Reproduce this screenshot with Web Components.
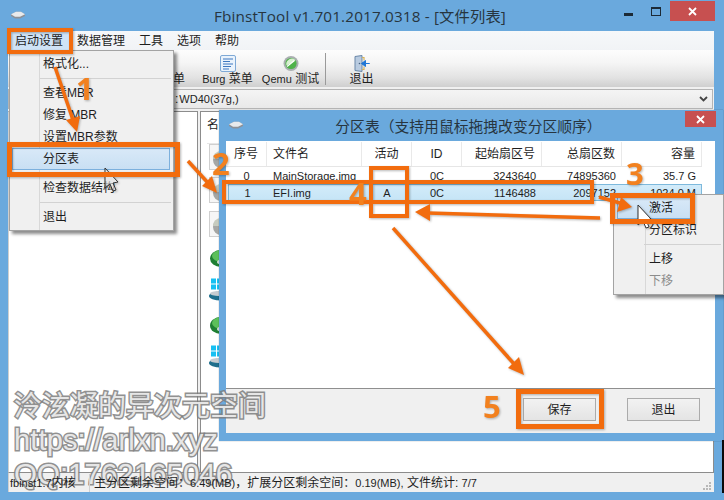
<!DOCTYPE html>
<html lang="zh">
<head>
<meta charset="utf-8">
<title>FbinstTool</title>
<style>
html,body{margin:0;padding:0;width:724px;height:500px;overflow:hidden;background:#000}
body{font:12px/16px "Liberation Sans","Noto Sans CJK SC",sans-serif;color:#1e1e1e;text-spacing-trim:space-all}
.n{font-size:11px}
</style>
</head>
<body>
<x-desktop>
  <x-window title="FbinstTool v1.701.2017.0318 - [文件列表]">
    <x-menubar>
      <x-bar-item active>启动设置</x-bar-item><x-bar-item>数据管理</x-bar-item><x-bar-item>工具</x-bar-item><x-bar-item>选项</x-bar-item><x-bar-item>帮助</x-bar-item>
    </x-menubar>
    <x-toolbar>
      <x-tool><span>菜单</span></x-tool>
      <x-tool><svg slot="icon" width="16" height="17" viewBox="0 0 16 17"><rect x=".5" y=".5" width="15" height="16" rx="1.5" fill="#eaf3fc" stroke="#7fa9d6"/><path d="M3 4h10M3 6.5h7M3 9h10M3 11.5h8M3 14h6" stroke="#3f78c0" stroke-width="1.1"/></svg><span class="n">Burg</span> 菜单</x-tool>
      <x-tool><svg slot="icon" width="16" height="17" viewBox="0 0 16 17"><circle cx="8" cy="8.5" r="7.5" fill="#a9aeb0"/><circle cx="8" cy="8.5" r="5.6" fill="#4fb24a"/><path d="M3.4 10.5A5.6 5.6 0 0 1 12.5 5L8.5 8z" fill="#d7f0cf"/><path d="M4 11.5 11.5 5.5" stroke="#fff" stroke-width="1.2"/></svg><span class="n">Qemu</span> 测试</x-tool>
      <x-tool-sep></x-tool-sep>
      <x-tool><svg slot="icon" width="17" height="17" viewBox="0 0 17 17"><path d="M2 1.5 9 .5v16l-7-1z" fill="#b9cbe0" stroke="#6a87a8"/><path d="M9 2.5h2v3M11 11.500v3H9" fill="none" stroke="#d7b35a" stroke-width="1.2"/><path d="M16.500 8.500h-4V5.500l-4 3 4 3v-3z" fill="#1e76d6" stroke="#1e76d6"/><circle cx="6.500" cy="8.500" r=".8" fill="#47617e"/></svg>退出</x-tool>
    </x-toolbar>
    <x-combo><span>:</span><span class="n" style="margin-left:1px">WD40(37g,)</span></x-combo>
    <x-panes>
      <x-pane slot="left"></x-pane>
      <x-pane slot="right">
        <x-file-list>
          <x-file-icon kind="box"></x-file-icon><x-file-icon kind="box"></x-file-icon><x-file-icon kind="box"></x-file-icon>
          <x-file-icon kind="green"></x-file-icon><x-file-icon kind="win"></x-file-icon>
          <x-file-icon kind="green"></x-file-icon><x-file-icon kind="win"></x-file-icon>
        </x-file-list>
      </x-pane>
    </x-panes>
    <x-statusbar>
      <span slot="a"><span class="n">fbinst1.7</span>内核</span>
      <span slot="b">主分区剩余空间：<span class="n">6.49(MB)</span>，扩展分区剩余空间：<span class="n">0.19(MB),</span> 文件统计: <span class="n">7/7</span></span>
    </x-statusbar>
  </x-window>

  <x-popup-menu style="left:9px;top:50px;width:165px;--gutter:29px">
    <x-item>格式化...</x-item><x-sep></x-sep>
    <x-item>查看MBR</x-item><x-item>修复 MBR</x-item><x-item>设置MBR参数</x-item>
    <x-item hl style="--inset:2px;--end:3px">分区表</x-item><x-sep></x-sep>
    <x-item>检查数据结构</x-item><x-sep></x-sep>
    <x-item>退出</x-item>
  </x-popup-menu>

  <x-dialog title="分区表（支持用鼠标拖拽改变分区顺序）">
    <x-table-row head>
      <span class="c">序号</span><span>文件名</span><span class="c">活动</span><span class="c">ID</span><span class="r">起始扇区号</span><span class="r">总扇区数</span><span class="r">容量</span>
    </x-table-row>
    <x-table-row>
      <span class="c n">0</span><span class="n">MainStorage.img</span><span class="c n"></span><span class="c n">0C</span><span class="r n">3243640</span><span class="r n">74895360</span><span class="r n">35.7 G</span>
    </x-table-row>
    <x-table-row selected>
      <span class="c n">1</span><span class="n">EFI.img</span><span class="c n">A</span><span class="c n">0C</span><span class="r n">1146488</span><span class="r n">2097152</span><span class="r n">1024.0 M</span>
    </x-table-row>
    <x-button slot="actions">保存</x-button>
    <x-button slot="actions">退出</x-button>
  </x-dialog>

  <x-popup-menu style="left:613px;top:194px;width:111px;--gutter:31px;--text:35px">
    <x-item hl style="--inset:3px;--end:31px">激活</x-item><x-item>分区标识</x-item><x-sep></x-sep>
    <x-item>上移</x-item><x-item disabled>下移</x-item>
  </x-popup-menu>

  <x-watermark>
    <div>泠泫凝的异次元空间</div>
    <div class="u">https://arlxn.xyz</div>
    <div class="q">QQ:1762165046</div>
  </x-watermark>
  <x-callouts></x-callouts>
</x-desktop>

<script>
const disk = (w=16,h=8)=>`<svg width="${w}" height="${h}" viewBox="0 0 16 8"><path d="M1 3.500 6 .8h5l4 2.700v1.500L10 7.500H5L1 5z" fill="#8d9197"/><path d="M1 3.300 6 .8h5l4 2.500-5 2.400H5z" fill="#e8eaec"/></svg>`;
function def(name, html, init){
  customElements.define(name, class extends HTMLElement{
    constructor(){
      super();
      this.attachShadow({mode:'open'});
    }
    connectedCallback(){
      if(this.shadowRoot.childElementCount) return;
      const t=document.createElement('template');
      t.innerHTML = typeof html==='function' ? html(this) : html;
      this.shadowRoot.append(t.content.cloneNode(true));
      if(init) init(this);
    }
  });
}

def('x-desktop',`<style>:host{display:block;position:relative;width:724px;height:500px;overflow:hidden}
.edge{position:absolute;left:722px;top:440px;width:2px;height:53px;background:#0a0a0a}</style><slot></slot><div class="edge"></div>`);

def('x-window',h=>`<style>
:host{display:flex;flex-direction:column;width:724px;height:500px;box-sizing:border-box;background:#6aa9dd;padding:0 10px 8px 8px}
header{height:31px;flex:none;display:flex;align-items:center;justify-content:center;position:relative;font:15.300px/20px "Open Sans","Noto Sans CJK SC",sans-serif;color:#27353f;letter-spacing:.15px;padding-right:2px}
.ico{position:absolute;left:2px;top:11px;display:flex}
.ctl{position:absolute;top:0;right:-1px;display:flex;align-items:flex-start}
.min{width:9px;height:3px;background:#1c2a36;margin:13px 18px 0 0}
.max{width:8px;height:6px;border:1.500px solid #1c2a36;border-top-width:2px;margin:7px 9px 0 0}
.cls{width:45px;height:20px;margin-top:1px;background:#c75050;color:#fff;display:flex;align-items:center;justify-content:center}
</style>
<header><span class="ico">${disk()}</span>${h.getAttribute('title')}
<span class="ctl"><span class="min"></span><span class="max"></span><span class="cls"><svg width="9" height="9" viewBox="0 0 9 9"><path d="M1 1l7 7M8 1 1 8" stroke="#fff" stroke-width="1.800"/></svg></span></span></header>
<slot></slot>`);

def('x-menubar',`<style>:host{display:flex;flex:none;height:19px;background:linear-gradient(#f6f8fa,#f1f3f6);align-items:stretch}</style><slot></slot>`);
def('x-bar-item',`<style>:host{display:flex;align-items:center;padding:0 7px;height:19px;box-sizing:border-box}
:host([active]){background:#cfe3f6;}</style><slot></slot>`);

def('x-toolbar',`<style>:host{display:grid;flex:none;height:37px;grid-template-columns:46px 63px 63px 6px 67px;padding-left:142px;background:linear-gradient(#fdfdfd 0,#f5f5f5 35%,#e2e2e2 75%,#cfcfcf 100%);border-bottom:0 solid #aaa}</style><slot></slot>`);
def('x-tool',`<style>:host{display:flex;flex-direction:column;align-items:center;height:37px}
.i{height:17px;margin-top:5px;display:flex;align-items:flex-start;justify-content:center}
.t{margin-top:-1px;line-height:16px;white-space:nowrap;padding-top:0}</style>
<div class="i"><slot name="icon"></slot></div><div class="t"><slot></slot></div>`);
def('x-tool-sep',`<style>:host{display:block;width:1px;margin:3px 0 2px 3px;background:#9a9a9a}</style>`);

def('x-combo',`<style>:host{display:block;flex:none;height:23px;box-sizing:border-box;background:#f0f0f0;padding:2px 1px 1px 0}
.b{height:20px;box-sizing:border-box;border:1px solid #b4b4b4;background:linear-gradient(#f4f4f4,#e9e9e9);display:flex;align-items:center;padding-left:166px;position:relative}
svg{position:absolute;right:4px;top:5px}</style>
<div class="b"><slot></slot><svg width="9" height="8" viewBox="0 0 9 8"><path d="M1 2l3.500 3.500L8 2" fill="none" stroke="#444" stroke-width="1.800"/></svg></div>`);

def('x-panes',`<style>:host{display:flex;flex:1;min-height:0;background:#f0f0f0;padding-top:1px}
::slotted([slot=left]){width:190px;flex:none}
::slotted([slot=right]){flex:1;margin-left:2px}</style><slot name="left"></slot><slot name="right"></slot>`);
def('x-pane',`<style>:host{display:block;box-sizing:border-box;background:#fff;border:1px solid #8c8c8c;border-width:1px 1px 0 1px;overflow:hidden}
:host([slot=left]){border-left-color:#cfcfcf}</style><slot></slot>`);

def('x-file-list',`<style>:host{display:block;padding:5px 0 0 6px}
.h{height:26px;line-height:16px;border-bottom:1px solid #e6e6e6;margin-bottom:0}
.g{display:grid;grid-auto-rows:33.330px;padding-left:2px}</style><div class="h">名称</div><div class="g"><slot></slot></div>`);
def('x-file-icon',h=>{
  const k=h.getAttribute('kind');
  let s='';
  if(k==='box') s=`<svg width="24" height="27" viewBox="0 0 24 27"><rect x=".5" y=".5" width="23" height="25" fill="#f6f6f6" stroke="#cfcfcf"/><ellipse cx="12" cy="16" rx="8" ry="8" fill="#a5a7a5"/><path d="M4 15a8 8 0 0 1 16 0z" fill="#c6cbbf"/></svg>`;
  if(k==='green') s=`<svg style="margin-top:5px" width="24" height="18" viewBox="0 0 24 18"><ellipse cx="12" cy="9.500" rx="11" ry="8.500" fill="#1f7f33"/><ellipse cx="13" cy="7" rx="10" ry="6" fill="#5cc05a"/><ellipse cx="14" cy="13" rx="6" ry="3" fill="#d7e2d8"/></svg>`;
  if(k==='win') s=`<svg width="24" height="24" viewBox="0 0 24 24"><path d="M2 1.500h5v5H2zM8 1.500h5.500v5H8zM2 7.500h5v5H2zM8 7.500h5.500v5H8z" fill="#17c0f2"/><ellipse cx="12" cy="19" rx="12" ry="4.500" fill="#1f6f8d"/><ellipse cx="10" cy="16.500" rx="9" ry="2.600" fill="#c6ccd1"/></svg>`;
  return `<style>:host{display:block;height:33px;overflow:visible}svg{display:block}</style>${s}`;
});

def('x-statusbar',`<style>:host{display:flex;flex:none;height:20px;box-sizing:border-box;align-items:center;background:#f0f0f0;border-top:1px solid #8c8c8c;border-left:1px solid #cfcfcf;position:relative;white-space:nowrap}
.a{width:79px;padding-left:1px;box-sizing:content-box;border-right:1px solid #d0d0d0;height:18px;line-height:18px;position:relative;z-index:5}
.b{padding-left:4px;position:relative;z-index:5}
svg{position:absolute;right:2px;bottom:1px}</style>
<div class="a"><slot name="a"></slot></div><div class="b"><slot name="b"></slot></div>
<svg width="9" height="9" viewBox="0 0 9 9" fill="#b8b8b8"><rect x="6" y="0" width="2" height="2"/><rect x="3" y="3" width="2" height="2"/><rect x="6" y="3" width="2" height="2"/><rect x="0" y="6" width="2" height="2"/><rect x="3" y="6" width="2" height="2"/><rect x="6" y="6" width="2" height="2"/></svg>`);

def('x-popup-menu',`<style>:host{display:block;position:absolute;box-sizing:border-box;background:#f0f0f0;border:1px solid #a3a3a3;box-shadow:3px 3px 3px rgba(0,0,0,.45);padding:2px 0 2px;background-image:linear-gradient(#d8d8d8,#d8d8d8);background-size:1px 100%;background-position:var(--gutter) 0;background-repeat:no-repeat}</style><slot></slot>`);
def('x-item',`<style>:host{display:flex;align-items:center;height:22px;box-sizing:border-box;padding-left:var(--text,33px);white-space:nowrap;position:relative}
:host([disabled]){color:#8c8c8c}
:host([hl]){background:linear-gradient(#d9e9f8,#c8dff3);box-shadow:inset 0 0 0 1px #7cb0dd;margin:0 var(--end,0) 0 var(--inset,0);padding-left:calc(var(--text,33px) - var(--inset,0px))}</style><slot></slot>`);
def('x-sep',`<style>:host{display:block;height:7px;position:relative}
i{position:absolute;left:30px;right:2px;top:3px;height:1px;background:#d2d2d2}</style><i></i>`);

def('x-dialog',h=>`<style>
:host{display:flex;flex-direction:column;position:absolute;left:219px;top:110px;width:504px;height:331px;box-sizing:border-box;background:#6aa9dd;padding:0 8px 8px 7px;box-shadow:0 0 1px rgba(0,0,0,.4)}
header{height:31px;flex:none;position:relative;display:flex;align-items:center;justify-content:center;font:14.800px/20px "Noto Sans CJK TC","Noto Sans CJK SC",sans-serif;color:#27353f;padding-right:4px}
.ico{position:absolute;left:2px;top:11px;display:flex}
.cls{position:absolute;right:-1px;top:1px;width:31px;height:16px;background:#c75050;display:flex;align-items:center;justify-content:center}
main{flex:1;background:#fff;padding-top:1px;min-height:0}
footer{flex:none;height:45px;box-sizing:border-box;background:#f0f0f0;border-top:1px solid #8f8f8f;display:flex;padding:9px 0 0 297px;gap:31px}
</style>
<header><span class="ico">${disk()}</span><span>${h.getAttribute('title')}</span><span class="cls"><svg width="9" height="9" viewBox="0 0 9 9"><path d="M1 1l7 7M8 1 1 8" stroke="#fff" stroke-width="1.800"/></svg></span></header>
<main><slot></slot></main><footer><slot name="actions"></slot></footer>`);

def('x-table-row',`<style>
:host{display:grid;grid-template-columns:41px 95px 50px 50px 80px 80px 80px;width:476px;height:17px;align-items:center;box-sizing:border-box;line-height:16px;white-space:nowrap}
:host([head]){height:25px;border-bottom:1px solid #e6e6e6}
:host([selected]){background:linear-gradient(#d3ecfa,#c5e4f6);outline:1px solid #7db9dc;outline-offset:-1px;margin-left:2px;width:474px;grid-template-columns:39px 95px 50px 50px 80px 80px 80px}
::slotted(span){padding:0 6px;box-sizing:border-box;overflow:hidden;height:16px}
::slotted(.c){text-align:center}
::slotted(.r){text-align:right}
:host([head]) ::slotted(span){height:24px;line-height:24px;border-right:1px solid #e9e9e9}
</style><slot></slot>`);

def('x-button',`<style>:host{display:flex;align-items:center;justify-content:center;width:73px;height:23px;box-sizing:border-box;border:1px solid #ababab;background:linear-gradient(#f2f2f2,#e4e4e4)}</style><slot></slot>`);

def('x-watermark',`<style>:host{display:block;position:absolute;z-index:4;left:14px;top:389px;pointer-events:none;font:28px/35px "Liberation Sans","Noto Sans CJK SC",sans-serif;color:rgba(255,255,255,.8);-webkit-text-stroke:3px rgba(125,125,125,.85);paint-order:stroke fill;white-space:nowrap}
::slotted(div){height:34px}
::slotted(.u){font-size:29px;letter-spacing:.15px;height:33px}
::slotted(.q){font-size:29.500px}</style><slot></slot>`);

def('x-callouts',`<style>:host{display:block;position:absolute;z-index:6;left:0;top:0;width:724px;height:500px;pointer-events:none}
svg{display:block;filter:drop-shadow(1px 1px 1px rgba(0,0,0,.28))}
text{font:700 31px "Open Sans","Liberation Sans",sans-serif;fill:#f2811f}
rect{fill:none;stroke:#f26c0e}
line{stroke:#f26c0e;stroke-width:3.500}
polygon.h{fill:#f26c0e}</style>
<svg width="724" height="500" viewBox="0 0 724 500">
<polygon points="105,168 105,188 110,184 113,191 116,190 113,183 118,182" fill="rgba(255,255,255,.55)" stroke="#333" stroke-width="1"/>
<polygon points="638,205 638,225 643,221 646,228 649,227 646,220 651,219" fill="#fff" stroke="#333" stroke-width="1"/>
<rect x="9" y="30" width="62" height="22" stroke-width="4"/>
<rect x="9.500" y="144.500" width="168" height="30" stroke-width="5"/>
<rect x="224" y="182" width="368" height="20" stroke-width="4"/>
<rect x="371" y="168" width="36" height="48" stroke-width="4"/>
<rect x="612.500" y="195.500" width="80" height="26" stroke-width="5"/>
<rect x="518.500" y="391.500" width="83" height="35" stroke-width="5"/>
<line x1="55" y1="67" x2="73" y2="120"/><polygon class="h" points="77,132 66,120 80,116"/>
<line x1="188" y1="161" x2="209" y2="184"/><polygon class="h" points="217,193 202,186 212,176"/>
<line x1="599" y1="197" x2="620" y2="203"/><polygon class="h" points="632,207 617,212 621,197"/>
<line x1="600" y1="218" x2="428" y2="213"/><polygon class="h" points="415,212 430,204 430,221"/>
<line x1="393" y1="228" x2="515" y2="365"/><polygon class="h" points="524,375 508,368 519,357"/>
<text x="76" y="100">1</text>
<text x="212" y="175">2</text>
<text x="626" y="185">3</text>
<text x="349" y="205">4</text>
<text x="483" y="418">5</text>
</svg>`);
</script>
</body>
</html>
